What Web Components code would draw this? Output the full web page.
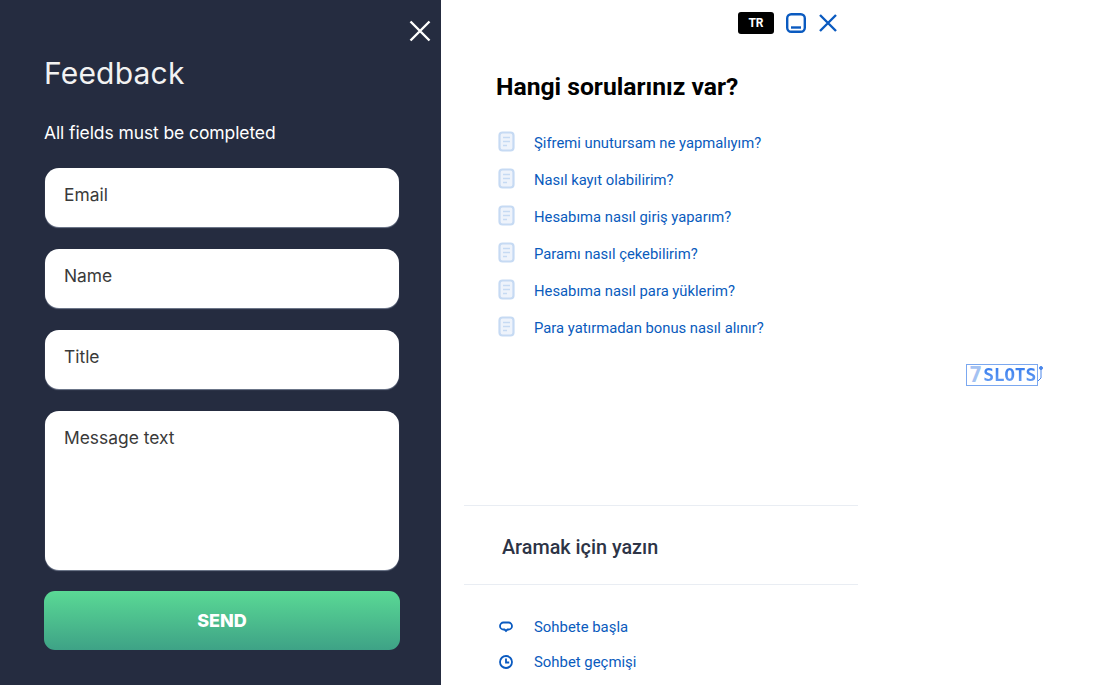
<!DOCTYPE html>
<html lang="tr">
<head>
<meta charset="utf-8">
<title>Feedback</title>
<style>
  html, body { margin: 0; padding: 0; height: 100%; background: #fff; overflow: hidden; }
  body { display: flex; width: 1100px; height: 685px; }
</style>
</head>
<body>
<feedback-panel>
  <field-box style="--h:59px">Email</field-box>
  <field-box style="--h:59px">Name</field-box>
  <field-box style="--h:59px">Title</field-box>
  <field-box style="--h:159px">Message text</field-box>
</feedback-panel>
<help-panel>
  <faq-item>Şifremi unutursam ne yapmalıyım?</faq-item>
  <faq-item>Nasıl kayıt olabilirim?</faq-item>
  <faq-item>Hesabıma nasıl giriş yaparım?</faq-item>
  <faq-item>Paramı nasıl çekebilirim?</faq-item>
  <faq-item>Hesabıma nasıl para yüklerim?</faq-item>
  <faq-item>Para yatırmadan bonus nasıl alınır?</faq-item>
</help-panel>
<script>
class FieldBox extends HTMLElement {
  constructor() {
    super();
    this.attachShadow({ mode: "open" }).innerHTML = `
      <style>
        :host {
          display: block;
          height: var(--h);
          box-sizing: border-box;
          background: #fff;
          border-radius: 14px;
          padding: 15px 19px 0;
          font: 400 17.4px/24px Inter, sans-serif;
          color: #3a3a3a;
          box-shadow: 0 1px 1px rgba(150,160,180,.7);
        }
      </style>
      <slot></slot>`;
  }
}
customElements.define("field-box", FieldBox);

class FeedbackPanel extends HTMLElement {
  constructor() {
    super();
    this.attachShadow({ mode: "open" }).innerHTML = `
      <style>
        :host {
          display: block;
          position: relative;
          width: 441px;
          height: 685px;
          flex: none;
          box-sizing: border-box;
          background: #252c40;
          padding: 0 42px 0 45px;
          font-family: Inter, sans-serif;
        }
        h1 {
          margin: 0 0 0 -1px;
          padding-top: 53px;
          font-size: 30px;
          line-height: 40px;
          font-weight: 400;
          letter-spacing: .2px;
          color: #f2f2f2;
        }
        p {
          margin: 0 0 0 -1px;
          padding-top: 27px;
          font-size: 17.5px;
          line-height: 26px;
          color: #fff;
          letter-spacing: -.1px;
        }
        .fields { display: grid; gap: 22px; margin-top: 22px; }
        button {
          display: block;
          margin: 21px 0 0 -1px;
          width: 356px;
          height: 59px;
          border: 0;
          border-radius: 11px;
          background: linear-gradient(#5ad995, #3ea286);
          color: #fff;
          font: 800 18px Inter, sans-serif;
        }
        .close { position: absolute; top: 20px; right: 10px; width: 22px; height: 22px; }
      </style>
      <svg class="close" viewBox="0 0 22 22" fill="none" stroke="#fff" stroke-width="2.4"><path d="M1.5 1.5l19 19M20.5 1.5l-19 19"/></svg>
      <h1>Feedback</h1>
      <p>All fields must be completed</p>
      <div class="fields"><slot></slot></div>
      <button>SEND</button>`;
  }
}
customElements.define("feedback-panel", FeedbackPanel);

class FaqItem extends HTMLElement {
  constructor() {
    super();
    this.attachShadow({ mode: "open" }).innerHTML = `
      <style>
        :host {
          display: flex;
          align-items: center;
          gap: 19px;
          height: 37px;
          font: 400 14.8px Roboto, sans-serif;
          color: #0a5bbd;
        }
        svg { width: 17px; height: 21px; flex: none; margin: -3px 0 0 1px; }
      </style>
      <svg viewBox="0 0 17 21" fill="#eef3fb" stroke="#c6daf3" stroke-width="2.2"><rect x="1.500" y="1.500" width="14" height="18" rx="3"/><path d="M5 6.500h7M5 10.500h7M5 14.500h4" stroke-width="1.700"/></svg>
      <span><slot></slot></span>`;
  }
}
customElements.define("faq-item", FaqItem);

class HelpPanel extends HTMLElement {
  constructor() {
    super();
    this.attachShadow({ mode: "open" }).innerHTML = `
      <style>
        :host {
          display: block;
          position: relative;
          flex: 1;
          height: 685px;
          font-family: Roboto, sans-serif;
        }
        .col { width: 394px; margin-left: 23px; height: 100%; display: flex; flex-direction: column; }
        .top { display: flex; justify-content: flex-end; align-items: center; gap: 12px; height: 46px; padding-right: 20px; }
        .lang {
          width: 36px; height: 22px; border-radius: 3px; background: #000; color: #fff;
          font: 700 12px/22px Roboto, sans-serif; text-align: center;
        }
        .top svg { display: block; }
        h2 { margin: 25px 0 0 32px; font-size: 24.7px; line-height: 32px; font-weight: 700; color: #000; }
        .list { margin: 21.400px 0 0 33px; flex: 1; }
        .search {
          height: 80px; box-sizing: border-box;
          border-top: 1px solid #e9edf3; border-bottom: 1px solid #e9edf3;
          padding: 2px 0 0 38px;
          font-size: 19.8px; font-weight: 500; line-height: 80px; color: #2d3446;
        }
        .links { padding: 24px 0 0 35px; height: 100px; box-sizing: border-box; }
        .link { display: flex; align-items: center; gap: 21px; height: 35px; font-size: 14.9px; color: #0a5bbd; }
        .link svg { width: 14px; height: 14px; flex: none; }
        .logo {
          position: absolute; left: 525px; top: 364px;
          width: 72px; height: 22px; box-sizing: border-box;
          border: 1px solid #7ba8f0;
          display: flex; align-items: center; gap: 1px; padding-left: 2px;
          font: 700 18px/20px "DejaVu Sans Mono", monospace;
        }
        .logo i { font-style: normal; color: #a4c2f2; font-size: 22px; }
        .logo span {
          background: linear-gradient(#2f78ee, #6fa3f3);
          -webkit-background-clip: text; background-clip: text; color: transparent;
          letter-spacing: -.3px;
        }
        .arm { position: absolute; left: 70px; top: 0; width: 6px; height: 18px; }
      </style>
      <div class="col">
        <div class="top">
          <div class="lang">TR</div>
          <svg width="20" height="20" viewBox="0 0 20 20" fill="none" stroke="#0a5ac0" stroke-width="2.4"><rect x="1.200" y="1.200" width="17.600" height="17.600" rx="4"/><path d="M5 14.500h10"/></svg>
          <svg width="20" height="20" viewBox="0 0 20 20" fill="none" stroke="#0a5ac0" stroke-width="2.4"><path d="M2 2l16 16M18 2L2 18"/></svg>
        </div>
        <h2>Hangi sorularınız var?</h2>
        <div class="list"><slot></slot></div>
        <div class="search">Aramak için yazın</div>
        <div class="links">
          <div class="link"><svg viewBox="0 0 14 14" fill="none" stroke="#0a5ac0" stroke-width="1.800"><path d="M4.500 2.500h5a3.500 3.500 0 0 1 0 7H8.500L7 11 5.500 9.500h-1a3.500 3.500 0 0 1 0-7z"/></svg><span>Sohbete başla</span></div>
          <div class="link"><svg viewBox="0 0 14 14" fill="none" stroke="#0a5ac0" stroke-width="1.800"><circle cx="7" cy="7" r="6"/><path d="M7 3.500V7.500h3.200"/></svg><span>Sohbet geçmişi</span></div>
        </div>
      </div>
      <div class="logo"><i>7</i><span>SLOTS</span>
        <svg class="arm" viewBox="0 0 6 18" fill="none" stroke="#4a86ea" stroke-width="1"><circle cx="4" cy="3" r="1.500" fill="#4a86ea"/><path d="M4 4v9l-3 3"/></svg>
      </div>`;
  }
}
customElements.define("help-panel", HelpPanel);
</script>
</body>
</html>
